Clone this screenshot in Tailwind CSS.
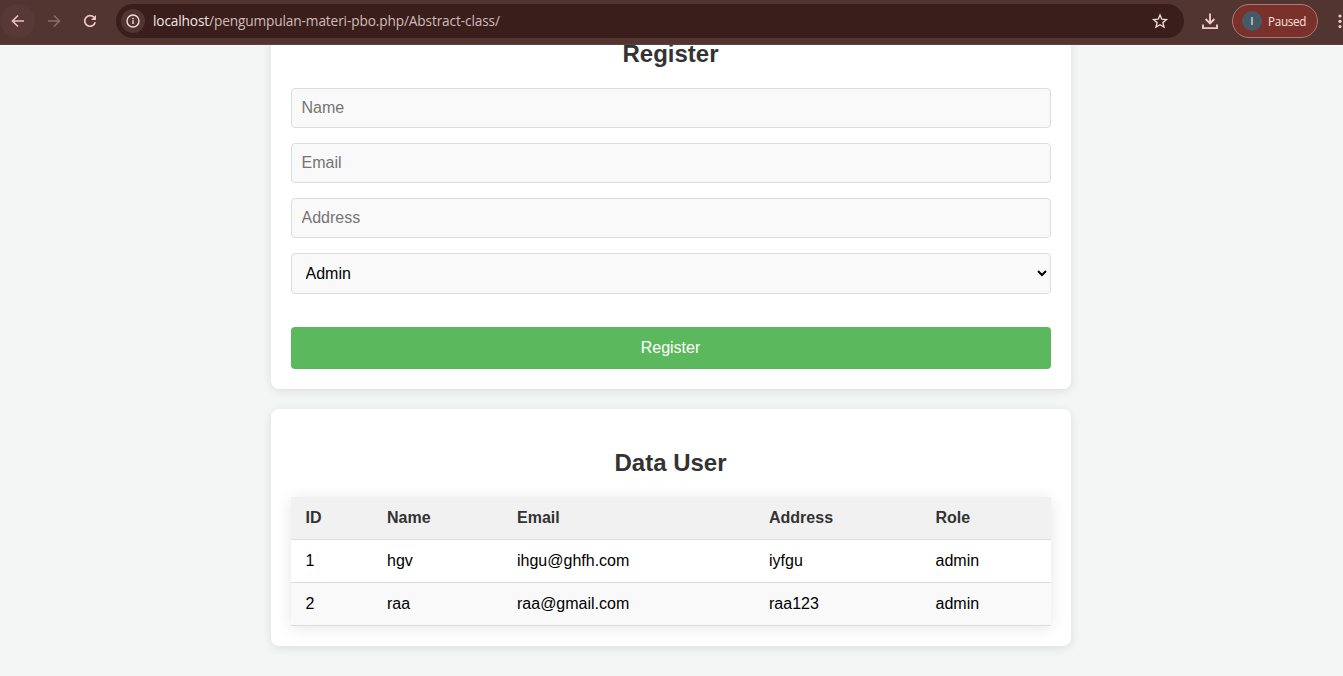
<!DOCTYPE html>
<html lang="id">
<head>
<meta charset="utf-8">
<title>Abstract Class</title>
<script src="https://cdn.jsdelivr.net/npm/@tailwindcss/browser@4"></script>
</head>
<body class="h-[676px] overflow-hidden bg-[#f4f6f6] font-['Liberation_Sans',Arial,sans-serif] text-base text-black flex flex-col">
<header class="relative z-10 h-[45px] shrink-0 bg-[#523431] border-b border-[#5d4340] flex items-start pt-1 pl-[1px] overflow-hidden font-['Open_Sans',sans-serif]">
  <div class="size-[34px] shrink-0 rounded-full bg-[#573a37] flex items-center justify-center">
    <svg class="size-5" viewBox="0 0 20 20" fill="none" stroke="#e9c0bc" stroke-width="1.6"><path d="M16 10H4.8M10 4.5L4.5 10l5.500 5.500"/></svg>
  </div>
  <div class="ml-[2px] size-[34px] shrink-0 flex items-center justify-center">
    <svg class="size-5" viewBox="0 0 20 20" fill="none" stroke="#8c6c69" stroke-width="1.6"><path d="M4 10h11.200M10 4.500l5.500 5.500-5.500 5.500"/></svg>
  </div>
  <div class="ml-[2px] size-[34px] shrink-0 flex items-center justify-center">
    <svg class="size-5" viewBox="0 0 20 20" fill="none" stroke="#f0c6c2" stroke-width="1.7"><path d="M15.200 11.200A5.300 5.300 0 1 1 14 6.400"/><path d="M16 4v5h-5z" fill="#f0c6c2" stroke="none"/></svg>
  </div>
  <div class="ml-[9px] h-[34px] w-[1068px] shrink-0 rounded-full bg-[#3a1e1b] flex items-center pl-[5px] pr-[14px]">
    <span class="size-6 rounded-full bg-[#523431] flex items-center justify-center">
      <svg class="size-4" viewBox="0 0 16 16" fill="none" stroke="#f0dedc" stroke-width="1.400"><circle cx="8" cy="8" r="6"/><path d="M8 7.200v3.800M8 4.800v1.500"/></svg>
    </span>
    <span class="ml-2 text-[13.7px] tracking-[-0.14px] leading-5 whitespace-nowrap text-[#cfbcba]"><span class="text-[#f3e6e4]">localhost</span>/pengumpulan-materi-pbo.php/Abstract-class/</span>
    <svg class="ml-auto size-5" viewBox="0 0 20 20" fill="none" stroke="#ecd9d7" stroke-width="1.400"><path d="M10 4l1.800 4.200 4.600.4-3.500 3 1.100 4.500-4-2.400-4 2.400 1.100-4.500-3.500-3 4.600-.4z"/></svg>
  </div>
  <svg class="ml-4 mt-[7px] size-5 shrink-0" viewBox="0 0 20 20" fill="none" stroke="#f3c9c5" stroke-width="1.900"><path d="M10 2.500v9.800M5.600 8l4.400 4.400L14.400 8M3 13.500v3.600h14v-3.600"/></svg>
  <div class="ml-3 h-[34px] w-[86px] shrink-0 rounded-full border border-[#a97c78] bg-[#7a302b] flex items-center pl-[9px]">
    <span class="size-5 rounded-full bg-[#455a64] text-[#cfd8dc] text-[11px] font-semibold leading-5 text-center">I</span>
    <span class="ml-[6px] text-[11.7px] tracking-[-0.3px] leading-4 text-[#fbe1de]">Paused</span>
  </div>
  <svg class="ml-[18px] mt-[9px] h-4 w-2 shrink-0" viewBox="0 0 8 16" fill="#f0c9c5"><circle cx="4" cy="3" r="1.600"/><circle cx="4" cy="8.300" r="1.600"/><circle cx="4" cy="13.600" r="1.600"/></svg>
</header>
<main class="ml-[270.5px] w-[800px] flex flex-col gap-5">
  <section class="-mt-[45px] h-[389px] rounded-lg bg-white p-5 shadow-[0_2px_10px_rgba(0,0,0,0.1)]">
    <h2 class="mt-5 text-center text-2xl leading-[27px] font-bold text-[#333]">Register</h2>
    <form class="mt-[21px] flex flex-col">
      <input class="h-10 rounded border border-[#ddd] bg-[#f9f9f9] px-[10px] placeholder:text-[#757575]" placeholder="Name">
      <input class="mt-[15px] h-10 rounded border border-[#ddd] bg-[#f9f9f9] px-[10px] placeholder:text-[#757575]" placeholder="Email">
      <input class="mt-[15px] h-10 rounded border border-[#ddd] bg-[#f9f9f9] px-[10px] placeholder:text-[#757575]" placeholder="Address">
      <select class="mt-[15px] h-[41px] rounded border border-[#ddd] bg-[#f9f9f9] pl-[10px]"><option>Admin</option></select>
      <button type="button" class="mt-[33px] h-[42px] rounded bg-[#5cb85c] text-white">Register</button>
    </form>
  </section>
  <section class="h-[237px] rounded-lg bg-white p-5 shadow-[0_2px_10px_rgba(0,0,0,0.1)]">
    <h2 class="mt-5 text-center text-2xl leading-7 font-bold text-[#333]">Data User</h2>
    <table class="mt-5 w-[760px] table-fixed border-separate border-spacing-0 text-left leading-[18px] shadow-[0_2px_15px_rgba(0,0,0,0.1)] [&_td]:h-[43px] [&_th]:h-[43px] [&_td]:px-[15px] [&_th]:px-[15px] [&_td]:border-b [&_th]:border-b [&_td]:border-[#ddd] [&_th]:border-[#ddd]">
      <colgroup><col class="w-[81.5px]"><col class="w-[130px]"><col class="w-[252px]"><col class="w-[166.5px]"><col class="w-[130px]"></colgroup>
      <thead><tr class="bg-[#f1f1f1] text-[#333]"><th>ID</th><th>Name</th><th>Email</th><th>Address</th><th>Role</th></tr></thead>
      <tbody>
        <tr class="bg-white"><td>1</td><td>hgv</td><td>ihgu@ghfh.com</td><td>iyfgu</td><td>admin</td></tr>
        <tr class="bg-[#f9f9f9]"><td>2</td><td>raa</td><td>raa@gmail.com</td><td>raa123</td><td>admin</td></tr>
      </tbody>
    </table>
  </section>
</main>
</body>
</html>
